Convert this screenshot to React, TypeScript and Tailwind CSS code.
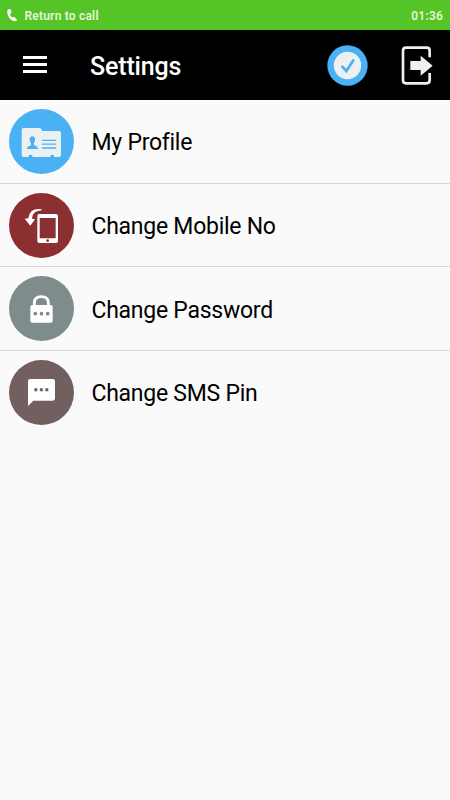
import type { ReactNode } from "react";

function ProfileIcon() {
  return (
    <svg viewBox="27 27 195 195" className="size-[65px] shrink-0">
      <circle cx="124.5" cy="124.5" r="97.5" fill="#4bb1f5" />
      <path
        d="M70 84H118Q122 84 124 88L127 93H178Q183 93 183 98V166Q183 171 178 171H162V167Q162 164 156.500 164Q151 164 151 167V171H97V167Q97 164 91.500 164Q86 164 86 167V171H70Q65 171 65 166V89Q65 84 70 84Z"
        fill="#ecf0f1"
      />
      <ellipse cx="97" cy="119" rx="8" ry="10" fill="#4bb1f5" />
      <path d="M93 125H102V136Q113 138 114 147H81Q82 138 93 136Z" fill="#4bb1f5" />
      <path d="M127 121H167M127 132.500H167M127 144H167" stroke="#4bb1f5" strokeWidth="4" strokeLinecap="round" />
    </svg>
  );
}

function MobileIcon() {
  return (
    <svg viewBox="27 24 195 195" className="size-[65px] shrink-0">
      <circle cx="124.5" cy="121.500" r="97.500" fill="#8c2f31" />
      <path
        fillRule="evenodd"
        d="M118 87H168Q174 87 174 93V168Q174 174 168 174H118Q112 174 112 168V93Q112 87 118 87ZM119 99V160H167V99Z"
        fill="#fff"
      />
      <circle cx="143" cy="167" r="4" fill="#8c2f31" />
      <path d="M125 73Q89 68 85 100L74 101L91 122L105 103L96 101Q97 77 125 76Z" fill="#fff" />
    </svg>
  );
}

function LockIcon() {
  return (
    <svg viewBox="27 24 195 195" className="size-[65px] shrink-0">
      <circle cx="124.5" cy="121.500" r="97.500" fill="#7e8c8c" />
      <path d="M103 115V105Q103 86 124 86Q145 86 145 105V115" fill="none" stroke="#fff" strokeWidth="8.500" />
      <rect x="91" y="111" width="67" height="53" rx="6" fill="#fff" />
      <g fill="#7e8c8c">
        <circle cx="106" cy="137" r="5.500" />
        <circle cx="124.5" cy="137" r="5.500" />
        <circle cx="143" cy="137" r="5.500" />
      </g>
    </svg>
  );
}

function MessageIcon() {
  return (
    <svg viewBox="27 24 195 195" className="size-[65px] shrink-0">
      <circle cx="124.5" cy="121.500" r="97.500" fill="#725f5f" />
      <path d="M91 81H158Q165 81 165 88V138Q165 146 157 146H100L84 162V88Q84 81 91 81Z" fill="#fff" />
      <path d="M103 109H112V118H103ZM119.500 109H128.500V118H119.500ZM136 109H145V118H136Z" fill="#725f5f" />
    </svg>
  );
}

function StatusBar() {
  return (
    <div className="flex h-[30px] items-center bg-[#54c426] pr-[7px] pl-[7px] text-[12px] font-semibold tracking-[0.2px] text-[#e4f6dc]">
      <svg viewBox="0 0 30 38" className="mr-[7.500px] h-[12.700px] w-[10px]">
        <path
          d="M4 1L9 0Q11 0 12 3L13 11Q13 13 8 15Q11 22 15 25Q19 23 21 24L28 29Q31 32 28 35Q23 39 15 34Q3 26 1 12Q0 4 4 1Z"
          fill="#fff"
        />
      </svg>
      <span className="pt-px">Return to call</span>
      <span className="ml-auto pt-px">01:36</span>
    </div>
  );
}

function Header() {
  return (
    <header className="flex h-[70px] items-center bg-black text-white">
      <button aria-label="Menu" className="mb-px ml-[23px] flex w-6 flex-col gap-[4px]">
        <span className="h-[3px] bg-white" />
        <span className="h-[3px] bg-white" />
        <span className="h-[3px] bg-white" />
      </button>
      <h1 className="ml-[43px] pt-[3px] text-[25px] leading-[30px] font-medium tracking-[-0.15px]">Settings</h1>
      <svg viewBox="21 26 123 123" className="ml-auto size-[41px]">
        <circle cx="82.500" cy="87.500" r="60.500" fill="#4bb1f5" />
        <circle cx="82.500" cy="87.500" r="41" fill="#ecf0f1" />
        <path d="M67 91L79 104L100 72" fill="none" stroke="#4bb1f5" strokeWidth="8" strokeLinecap="round" />
      </svg>
      <svg viewBox="33 28 99 117" className="mr-[16px] ml-[33px] h-[39px] w-[33px]">
        <path
          d="M119 62V42Q119 33 110 33H48Q39 33 39 42V131Q39 140 48 140H110Q119 140 119 131V109"
          fill="none"
          stroke="#ecf0f1"
          strokeWidth="8"
        />
        <path d="M61 73H92V57L128 87L92 117V100H61Z" fill="#ecf0f1" />
      </svg>
    </header>
  );
}

function SettingsRow({ icon, label }: { icon: ReactNode; label: string }) {
  return (
    <li className="flex h-[83.670px] items-start gap-[17.500px] border-b border-[#d8d8d8] pt-[9px] pl-[9px] last:border-b-0">
      {icon}
      <span className="pt-[19.300px] text-[23px] leading-[30px] tracking-[-0.26px] text-black">{label}</span>
    </li>
  );
}

export default function App() {
  return (
    <div className="min-h-screen bg-[#fafafa] font-['Roboto',sans-serif]">
      <StatusBar />
      <Header />
      <ul>
        <SettingsRow icon={<ProfileIcon />} label="My Profile" />
        <SettingsRow icon={<MobileIcon />} label="Change Mobile No" />
        <SettingsRow icon={<LockIcon />} label="Change Password" />
        <SettingsRow icon={<MessageIcon />} label="Change SMS Pin" />
      </ul>
    </div>
  );
}
